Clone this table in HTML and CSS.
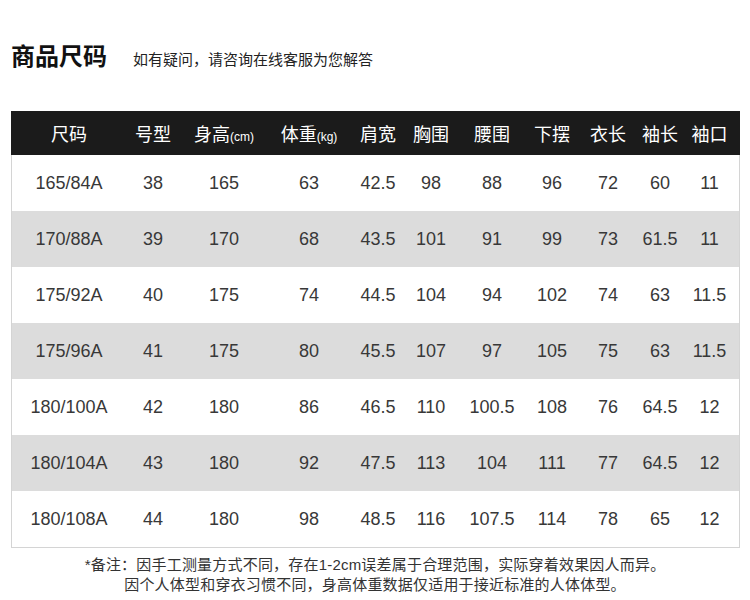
FILE: index.html
```html
<!DOCTYPE html>
<html lang="zh">
<head>
<meta charset="utf-8">
<link rel="stylesheet" href="styles.css">
</head>
<body>
<div class="head">
  <h1 class="title">商品尺码</h1>
  <span class="sub">如有疑问，请咨询在线客服为您解答</span>
</div>
<div class="table">
  <div class="row hdr">
    <div class="c"><span>尺码</span></div>
    <div class="c"><span>号型</span></div>
    <div class="c"><span>身高<small>(cm)</small></span></div>
    <div class="c"><span>体重<small>(kg)</small></span></div>
    <div class="c"><span>肩宽</span></div>
    <div class="c"><span>胸围</span></div>
    <div class="c"><span>腰围</span></div>
    <div class="c"><span>下摆</span></div>
    <div class="c"><span>衣长</span></div>
    <div class="c"><span>袖长</span></div>
    <div class="c"><span>袖口</span></div>
  </div>
  <div class="row">
    <div class="c"><span>165/84A</span></div><div class="c"><span>38</span></div><div class="c"><span>165</span></div><div class="c"><span>63</span></div><div class="c"><span>42.5</span></div><div class="c"><span>98</span></div><div class="c"><span>88</span></div><div class="c"><span>96</span></div><div class="c"><span>72</span></div><div class="c"><span>60</span></div><div class="c"><span>11</span></div>
  </div>
  <div class="row alt">
    <div class="c"><span>170/88A</span></div><div class="c"><span>39</span></div><div class="c"><span>170</span></div><div class="c"><span>68</span></div><div class="c"><span>43.5</span></div><div class="c"><span>101</span></div><div class="c"><span>91</span></div><div class="c"><span>99</span></div><div class="c"><span>73</span></div><div class="c"><span>61.5</span></div><div class="c"><span>11</span></div>
  </div>
  <div class="row">
    <div class="c"><span>175/92A</span></div><div class="c"><span>40</span></div><div class="c"><span>175</span></div><div class="c"><span>74</span></div><div class="c"><span>44.5</span></div><div class="c"><span>104</span></div><div class="c"><span>94</span></div><div class="c"><span>102</span></div><div class="c"><span>74</span></div><div class="c"><span>63</span></div><div class="c"><span>11.5</span></div>
  </div>
  <div class="row alt">
    <div class="c"><span>175/96A</span></div><div class="c"><span>41</span></div><div class="c"><span>175</span></div><div class="c"><span>80</span></div><div class="c"><span>45.5</span></div><div class="c"><span>107</span></div><div class="c"><span>97</span></div><div class="c"><span>105</span></div><div class="c"><span>75</span></div><div class="c"><span>63</span></div><div class="c"><span>11.5</span></div>
  </div>
  <div class="row">
    <div class="c"><span>180/100A</span></div><div class="c"><span>42</span></div><div class="c"><span>180</span></div><div class="c"><span>86</span></div><div class="c"><span>46.5</span></div><div class="c"><span>110</span></div><div class="c"><span>100.5</span></div><div class="c"><span>108</span></div><div class="c"><span>76</span></div><div class="c"><span>64.5</span></div><div class="c"><span>12</span></div>
  </div>
  <div class="row alt">
    <div class="c"><span>180/104A</span></div><div class="c"><span>43</span></div><div class="c"><span>180</span></div><div class="c"><span>92</span></div><div class="c"><span>47.5</span></div><div class="c"><span>113</span></div><div class="c"><span>104</span></div><div class="c"><span>111</span></div><div class="c"><span>77</span></div><div class="c"><span>64.5</span></div><div class="c"><span>12</span></div>
  </div>
  <div class="row">
    <div class="c"><span>180/108A</span></div><div class="c"><span>44</span></div><div class="c"><span>180</span></div><div class="c"><span>98</span></div><div class="c"><span>48.5</span></div><div class="c"><span>116</span></div><div class="c"><span>107.5</span></div><div class="c"><span>114</span></div><div class="c"><span>78</span></div><div class="c"><span>65</span></div><div class="c"><span>12</span></div>
  </div>
</div>
<div class="note">
  <p>*备注：因手工测量方式不同，存在1-2cm误差属于合理范围，实际穿着效果因人而异。</p>
  <p>因个人体型和穿衣习惯不同，身高体重数据仅适用于接近标准的人体体型。</p>
</div>
</body>
</html>
```

FILE: styles.css
```css
* { box-sizing: border-box; }
html, body {
  margin: 0;
  padding: 0;
  background: #fff;
  width: 750px;
  height: 600px;
  overflow: hidden;
}
body {
  font-family: "Liberation Sans", "Noto Sans CJK SC", sans-serif;
  color: #333;
}
.head {
  display: flex;
  align-items: baseline;
  gap: 26px;
  padding: 41px 0 0 11px;
  height: 111px;
}
.title {
  margin: 0;
  font-family: "Noto Sans CJK SC", sans-serif;
  font-size: 24px;
  line-height: 28px;
  font-weight: 700;
  color: #111;
}
.sub {
  font-family: "Noto Sans CJK SC", sans-serif;
  font-size: 15px;
  color: #222;
}
.table {
  margin-left: 11px;
  width: 729px;
  border: 1px solid #d4d4d4;
  border-top: none;
}
.row {
  display: grid;
  grid-template-columns: 114px 54px 88px 82px 56px 50px 72px 48px 64px 40px 59px;
  height: 56px;
  font-size: 18px;
  color: #383838;
  background: #fff;
}
.row.alt { background: #dcdcdc; }
.row.hdr {
  height: 44px;
  background: #1b1b1b;
  color: #fff;
  font-family: "Noto Sans CJK SC", sans-serif;
  font-size: 18px;
  margin: 0 -1px;
  padding: 0 1px;
}
.c {
  display: flex;
  justify-content: center;
  align-items: center;
  white-space: nowrap;
}
.hdr small {
  font-family: "Liberation Sans", sans-serif;
  font-size: 12px;
}
.note {
  margin-top: 7px;
  text-align: center;
  font-family: "Liberation Sans", "Noto Sans CJK SC", sans-serif;
  font-size: 15px;
  letter-spacing: 0.2px;
  color: #333;
}
.note p {
  margin: 0;
  line-height: 20px;
}
```
